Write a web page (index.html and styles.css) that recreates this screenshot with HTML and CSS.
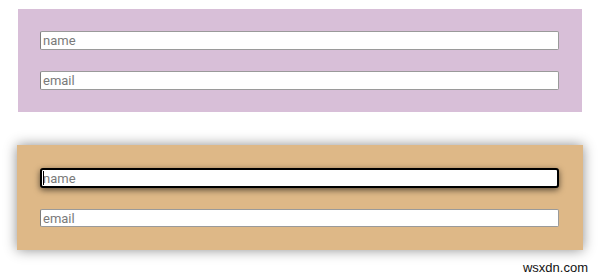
FILE: index.html
```html
<!DOCTYPE html>
<html>
<head>
<meta charset="utf-8">
<link rel="stylesheet" href="styles.css">
</head>
<body>
<div class="page">
  <form class="card card-plain">
    <input class="field" type="text" placeholder="name">
    <input class="field" type="text" placeholder="email">
  </form>
  <form class="card card-active">
    <span class="field-wrap">
      <input class="field field-focus" type="text" placeholder="name">
      <span class="caret"></span>
    </span>
    <input class="field" type="text" placeholder="email">
  </form>
  <div class="watermark">wsxdn.com</div>
</div>
</body>
</html>
```
FILE: styles.css
```css
html, body {
  margin: 0;
  padding: 0;
  background: #ffffff;
}
.page {
  width: 600px;
  height: 276px;
  padding-top: 9px;
  box-sizing: border-box;
  font-family: Roboto, "Liberation Sans", sans-serif;
}
.card {
  display: flex;
  flex-direction: column;
  gap: 21px;
  margin: 0;
  box-sizing: border-box;
}
.card-plain {
  background: #d8bfd8;
  margin-left: 18px;
  width: 564px;
  height: 103px;
  padding: 22px 23px 22px 22px;
}
.card-active {
  background: #deb887;
  margin-left: 17px;
  margin-top: 33px;
  width: 566px;
  height: 105px;
  padding: 23px 24px 23px 23px;
  box-shadow: 0 0 12px rgba(0, 0, 0, 0.45);
}
.field {
  display: block;
  width: 519px;
  height: 20px;
  box-sizing: border-box;
  margin: 0;
  padding: 0 2px;
  border: 1px solid #9a9a9a;
  border-left-color: #7d7d7d;
  border-radius: 2px;
  background: #ffffff;
  font-family: Roboto, "Liberation Sans", sans-serif;
  font-size: 13px;
  color: #222;
  outline: none;
}
.field::placeholder {
  color: #7a7a7a;
}
.field-wrap {
  position: relative;
  display: block;
  width: 519px;
  height: 20px;
}
.field-focus {
  border: 2px solid #000000;
  border-radius: 3px;
  padding: 0 1px;
  box-shadow: 0 2px 6px rgba(0, 0, 0, 0.6);
}
.caret {
  position: absolute;
  left: 3px;
  top: 3px;
  width: 1px;
  height: 14px;
  background: #000;
}
.watermark {
  margin-top: 10px;
  padding-right: 12px;
  text-align: right;
  font-family: "Liberation Sans", Arial, sans-serif;
  font-size: 13px;
  color: #111;
}
```
